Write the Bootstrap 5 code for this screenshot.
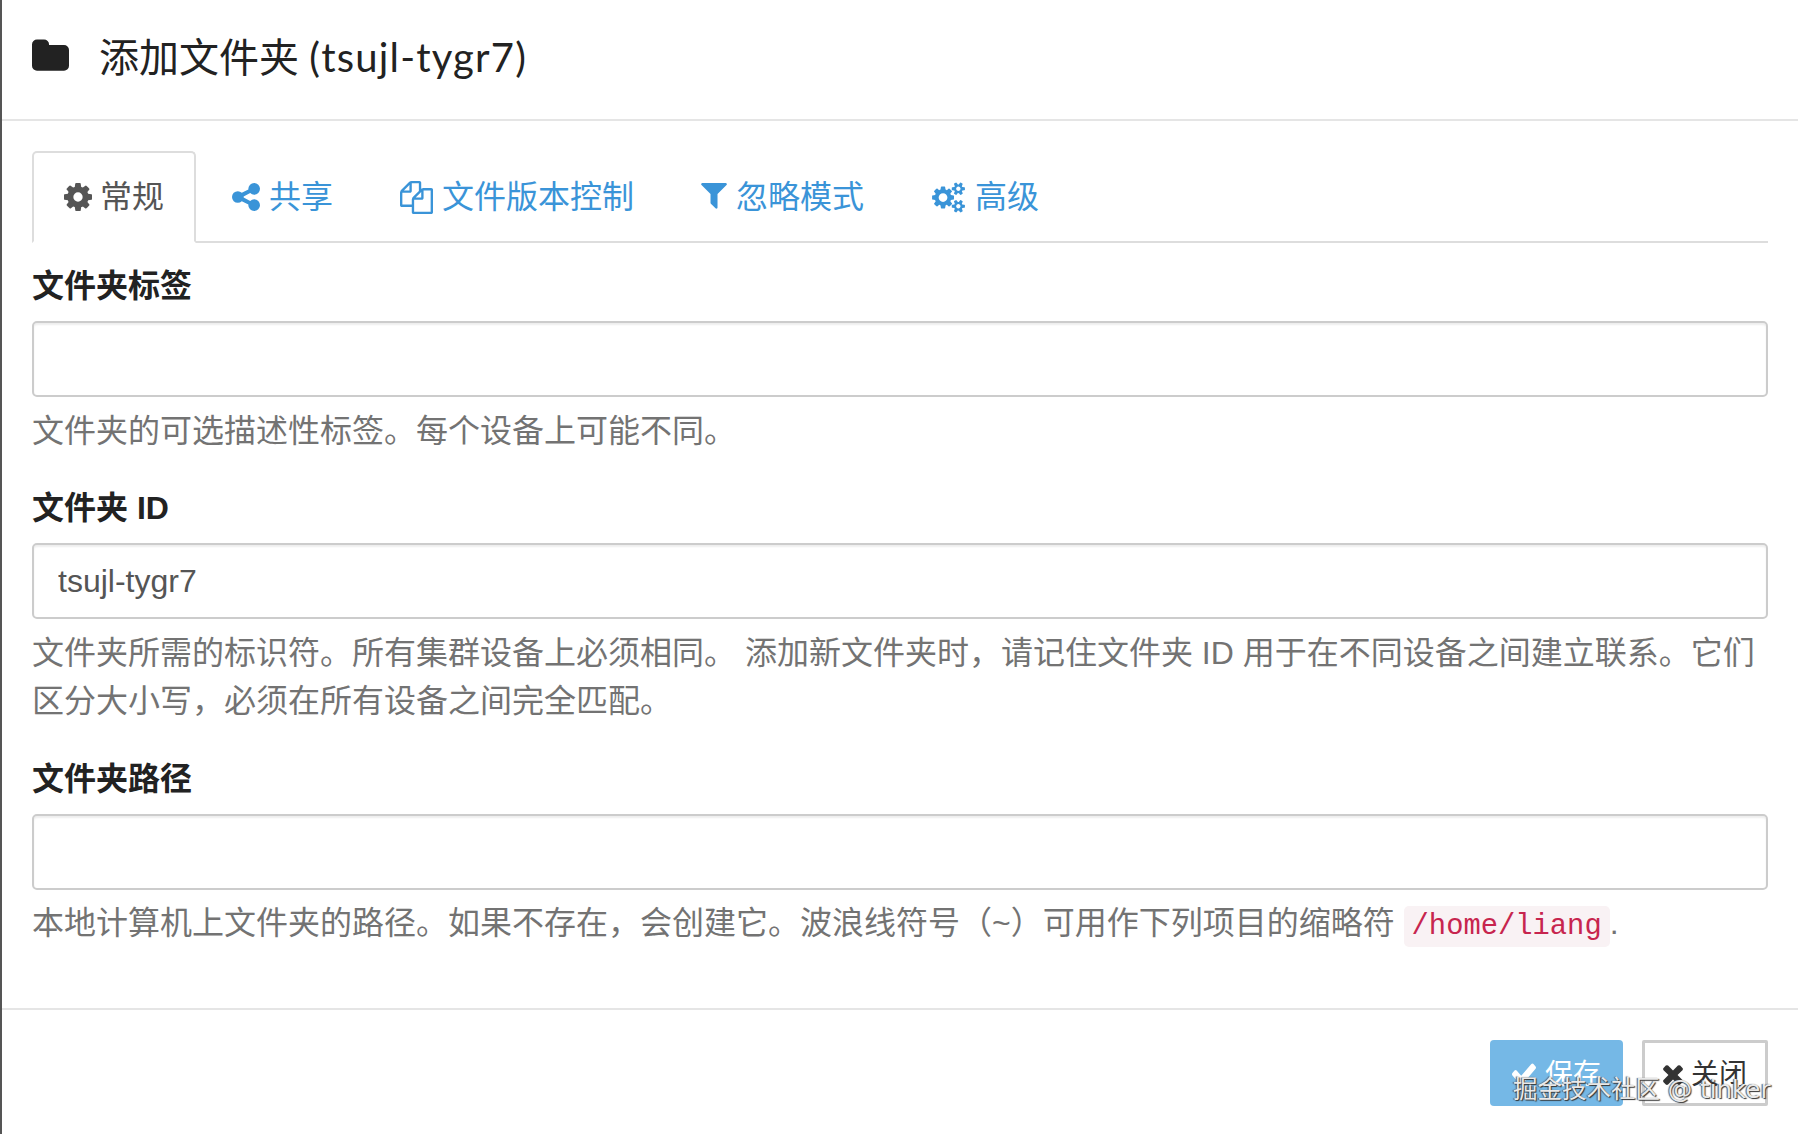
<!DOCTYPE html>
<html lang="zh-CN">
<head>
<meta charset="utf-8">
<title>添加文件夹</title>
<link href="https://cdn.jsdelivr.net/npm/bootstrap@5.3.0/dist/css/bootstrap.min.css" rel="stylesheet">
<style>
html,body{height:100%;}
body{font-family:"Liberation Sans","Noto Sans CJK SC",sans-serif;font-size:32px;color:#333;background:#fff;overflow:hidden;}
.sheet{position:relative;height:1134px;border-left:2px solid #555;}
.dlg-head{height:121px;padding:0 30px 6px 30px;border-bottom:2px solid #e5e5e5;gap:30px;}
.dlg-title{font-family:Lato,"Noto Sans CJK SC",sans-serif;font-size:40px;line-height:1;color:#222;margin:0;font-weight:400;}
.dlg-latin{letter-spacing:1.2px;}
.ico-folder{width:37px;height:37px;fill:#222;}
.dlg-body{padding:30px 30px 0 30px;}
.tabs-bar{border-bottom:2px solid #ddd;margin-bottom:19px;height:92px;}
.tabs-bar .nav-item{margin-right:3px;}
.tabs-bar .nav-item:first-child{margin-right:4px;}
.tabs-bar .nav-link{height:92px;padding:0 30px;margin-bottom:-2px;border:2px solid transparent;border-radius:5px 5px 0 0;color:#3a94d8;font-size:32px;line-height:88px;display:flex;align-items:center;gap:9px;}
.tabs-bar .nav-link.active{color:#555;border-color:#ddd #ddd #fff;background:#fff;gap:8px;}
.tab-ico{fill:currentColor;flex:none;}
.fld{margin-bottom:29px;}
.fld-label{display:block;font-weight:700;font-size:32px;line-height:48px;margin:0 0 11px;color:#222;}
.fld-input.form-control{height:76px;font-size:32px;padding:0 24px;border:2px solid #ccc;border-radius:5px;color:#555;box-shadow:inset 0 2px 2px rgba(0,0,0,.07);}
.fld-help.form-text{font-size:32px;line-height:48.5px;color:#737373;margin:9.5px 0 0;}
.fld-code{font-family:"Liberation Mono",monospace;font-size:28.8px;color:#c7254e;background:#f9f2f4;border-radius:5px;padding:4px 8px;}
.dlg-foot{position:absolute;left:0;right:0;top:1008px;border-top:2px solid #e5e5e5;padding:30px 30px 0 30px;gap:19px;}
.act{height:66px;font-size:28px;line-height:1;display:flex;align-items:center;}
.act-save.btn{background:#3498db;border:0;border-radius:4px;color:#fff;opacity:.68;padding:4px 22px 0;gap:9px;}
.act-close.btn{background:#fff;border:3px solid #ccc;color:#333;border-radius:2px;padding:4px 18px 0;gap:8px;}
.act svg{fill:currentColor;flex:none;margin-top:-2px;}
.wmark{position:absolute;left:1511px;top:1072px;font-family:"DejaVu Sans","Noto Sans CJK SC",sans-serif;font-size:24.5px;line-height:36px;color:#e9e9e9;white-space:nowrap;text-shadow:1px 1px 1px #333,-1px 0 1px #555;}
</style>
</head>
<body>
<div class="sheet">
  <div class="dlg-head d-flex align-items-center">
    <svg class="ico-folder" viewBox="0 0 1664 1664"><path transform="translate(0,-64)" d="M1664 608v704q0 92-66 158t-158 66H224q-92 0-158-66T0 1312V352q0-92 66-158t158-66h320q92 0 158 66t66 158v32h672q92 0 158 66t66 158z"/></svg>
    <h4 class="dlg-title">添加文件夹 <span class="dlg-latin">(tsujl-tygr7)</span></h4>
  </div>
  <div class="dlg-body">
    <ul class="nav nav-tabs tabs-bar">
      <li class="nav-item"><a class="nav-link active" href="#">
        <svg class="tab-ico" width="28" height="28" viewBox="128 128 1536 1536"><path d="M1152 896q0-106-75-181t-181-75-181 75-75 181 75 181 181 75 181-75 75-181zm512-109v222q0 12-8 23t-20 13l-185 28q-19 54-39 91 35 50 107 138 10 12 10 25t-9 23q-27 37-99 108t-94 71q-12 0-26-9l-138-108q-44 23-91 38-16 136-29 186-7 28-36 28h-222q-14 0-24.5-8.5t-11.5-21.5l-28-184q-49-16-90-37l-141 107q-10 9-25 9-14 0-25-11-126-114-165-168-7-10-7-23 0-12 8-23 15-21 51-66.5t54-70.5q-27-50-41-99l-183-27q-13-2-21-12.5t-8-23.5v-222q0-12 8-23t19-13l186-28q14-46 39-92-40-57-107-138-10-12-10-24 0-10 9-23 26-36 98.5-107.5t94.5-71.5q13 0 26 10l138 107q44-23 91-38 16-136 29-186 7-28 36-28h222q14 0 24.5 8.5t11.5 21.5l28 184q49 16 90 37l142-107q9-9 24-9 13 0 25 10 129 119 165 170 7 8 7 22 0 12-8 23-15 21-51 66.5t-54 70.5q26 50 41 98l183 28q13 2 21 12.5t8 23.5z"/></svg>常规</a></li>
      <li class="nav-item"><a class="nav-link" href="#">
        <svg class="tab-ico" width="28" height="28" viewBox="128 128 1536 1536"><path d="M1344 1024q133 0 226.5 93.5t93.5 226.5-93.5 226.5-226.5 93.5-226.5-93.5-93.5-226.5q0-12 2-34l-360-180q-92 86-218 86-133 0-226.5-93.5t-93.5-226.5 93.5-226.5 226.5-93.5q126 0 218 86l360-180q-2-22-2-34 0-133 93.5-226.5t226.5-93.5 226.5 93.5 93.5 226.5-93.5 226.5-226.5 93.5q-126 0-218-86l-360 180q2 22 2 34t-2 34l360 180q92-86 218-86z"/></svg>共享</a></li>
      <li class="nav-item"><a class="nav-link" href="#">
        <svg class="tab-ico" width="33" height="33" viewBox="0 0 1792 1792"><path d="M1696 384q40 0 68 28t28 68v1216q0 40-28 68t-68 28h-960q-40 0-68-28t-28-68v-288h-544q-40 0-68-28t-28-68v-672q0-40 20-88t48-76l408-408q28-28 76-48t88-20h416q40 0 68 28t28 68v328q68-40 128-40h416zm-544 213l-299 299h299v-299zm-640-384l-299 299h299v-299zm196 647l316-316v-416h-384v416q0 40-28 68t-68 28h-416v640h512v-256q0-40 20-88t48-76zm956 804v-1152h-384v416q0 40-28 68t-68 28h-416v640h896z"/></svg>文件版本控制</a></li>
      <li class="nav-item"><a class="nav-link" href="#">
        <svg class="tab-ico" width="26" height="28" viewBox="190 256 1410 1536"><path d="M1595 295q17 41-14 70l-493 493v742q0 42-39 59-13 5-25 5-27 0-45-19l-256-256q-19-19-19-45v-486l-493-493q-31-29-14-70 17-39 59-39h1280q42 0 59 39z"/></svg>忽略模式</a></li>
      <li class="nav-item"><a class="nav-link" href="#">
        <svg class="tab-ico" width="35" height="31" viewBox="0 0 2048 1792"><path d="M960 896q0-106-75-181t-181-75-181 75-75 181 75 181 181 75 181-75 75-181zm768 512q0-52-38-90t-90-38-90 38-38 90q0 53 37.5 90.5t90.5 37.5 90.5-37.5 37.5-90.5zm0-1024q0-52-38-90t-90-38-90 38-38 90q0 53 37.5 90.5t90.5 37.5 90.5-37.5 37.5-90.5zm-384 421v185q0 10-7 19.5t-16 10.5l-155 24q-11 35-32 76 34 48 90 115 7 11 7 20 0 12-7 19-23 30-82.5 89.5t-78.5 59.5q-11 0-21-7l-115-90q-37 19-77 31-11 108-23 155-7 24-30 24h-186q-11 0-20-7.5t-10-17.5l-23-153q-34-10-75-31l-118 89q-7 7-20 7-11 0-21-8-144-133-144-160 0-9 7-19 10-14 41-53t47-61q-23-44-35-82l-152-24q-10-1-17-9.5t-7-19.5v-185q0-10 7-19.5t16-10.5l155-24q11-35 32-76-34-48-90-115-7-11-7-20 0-12 7-20 22-30 82-89t79-59q11 0 21 7l115 90q34-18 77-32 11-108 23-154 7-24 30-24h186q11 0 20 7.5t10 17.5l23 153q34 10 75 31l118-89q8-7 20-7 11 0 21 8 144 133 144 160 0 8-7 19-12 16-42 54t-45 60q23 48 34 82l152 23q10 2 17 10.5t7 19.5zm640 533v140q0 16-149 31-12 27-30 52 51 113 51 138 0 4-4 7-122 71-124 71-8 0-46-47t-52-68q-20 2-30 2t-30-2q-14 21-52 68t-46 47q-2 0-124-71-4-3-4-7 0-25 51-138-18-25-30-52-149-15-149-31v-140q0-16 149-31 13-29 30-52-51-113-51-138 0-4 4-7 4-2 35-20t59-34 30-16q8 0 46 46.5t52 67.5q20-2 30-2t30 2q51-71 92-112l6-2q4 0 124 70 4 3 4 7 0 25-51 138 17 23 30 52 149 15 149 31zm0-1024v140q0 16-149 31-12 27-30 52 51 113 51 138 0 4-4 7-122 71-124 71-8 0-46-47t-52-68q-20 2-30 2t-30-2q-14 21-52 68t-46 47q-2 0-124-71-4-3-4-7 0-25 51-138-18-25-30-52-149-15-149-31v-140q0-16 149-31 13-29 30-52-51-113-51-138 0-4 4-7 4-2 35-20t59-34 30-16q8 0 46 46.5t52 67.5q20-2 30-2t30 2q51-71 92-112l6-2q4 0 124 70 4 3 4 7 0 25-51 138 17 23 30 52 149 15 149 31z"/></svg>高级</a></li>
    </ul>
    <div class="fld">
      <label class="fld-label">文件夹标签</label>
      <input class="form-control fld-input" type="text">
      <p class="form-text fld-help">文件夹的可选描述性标签。每个设备上可能不同。</p>
    </div>
    <div class="fld">
      <label class="fld-label">文件夹 ID</label>
      <input class="form-control fld-input" type="text" value="tsujl-tygr7">
      <p class="form-text fld-help">文件夹所需的标识符。所有集群设备上必须相同。 添加新文件夹时，请记住文件夹 ID 用于在不同设备之间建立联系。它们区分大小写，必须在所有设备之间完全匹配。</p>
    </div>
    <div class="fld">
      <label class="fld-label">文件夹路径</label>
      <input class="form-control fld-input" type="text">
      <p class="form-text fld-help">本地计算机上文件夹的路径。如果不存在，会创建它。波浪线符号（~）可用作下列项目的缩略符 <code class="fld-code">/home/liang</code>.</p>
    </div>
  </div>
  <div class="dlg-foot d-flex justify-content-end">
    <button class="btn act act-save" type="button"><svg width="24" height="22" viewBox="121 312 1550 1210" preserveAspectRatio="none"><path d="M1671 566q0 40-28 68l-724 724-136 136q-28 28-68 28t-68-28l-136-136-362-362q-28-28-28-68t28-68l136-136q28-28 68-28t68 28l294 295 656-657q28-28 68-28t68 28l136 136q28 28 28 68z"/></svg>保存</button>
    <button class="btn act act-close" type="button"><svg width="20" height="22" viewBox="302 238 1188 1316"><path d="M1490 1322q0 40-28 68l-136 136q-28 28-68 28t-68-28l-294-294-294 294q-28 28-68 28t-68-28l-136-136q-28-28-28-68t28-68l294-294-294-294q-28-28-28-68t28-68l136-136q28-28 68-28t68 28l294 294 294-294q28-28 68-28t68 28l136 136q28 28 28 68t-28 68l-294 294 294 294q28 28 28 68z"/></svg>关闭</button>
  </div>
  <div class="wmark">掘金技术社区 @ tinker</div>
</div>
<script src="https://cdn.jsdelivr.net/npm/bootstrap@5.3.0/dist/js/bootstrap.bundle.min.js"></script>
</body>
</html>
